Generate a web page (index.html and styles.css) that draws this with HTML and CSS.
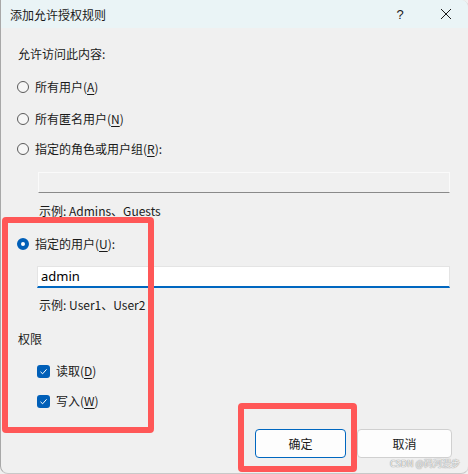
FILE: index.html
```html
<!DOCTYPE html>
<html lang="zh">
<head>
<meta charset="utf-8">
<link rel="stylesheet" href="styles.css">
</head>
<body>
<div class="window">
  <div class="titlebar">
    <span class="title">添加允许授权规则</span>
    <span class="help">?</span>
    <span class="close">
      <svg width="12" height="12" viewBox="0 0 12 12"><path d="M1 1L11 11M11 1L1 11" stroke="#1a1a1a" stroke-width="1"/></svg>
    </span>
  </div>
  <div class="content">
    <div class="row heading">允许访问此内容:</div>
    <div class="row radio-row r1"><span class="radio"></span><span>所有用户(<u>A</u>)</span></div>
    <div class="row radio-row r2"><span class="radio"></span><span>所有匿名用户(<u>N</u>)</span></div>
    <div class="row radio-row r3"><span class="radio"></span><span>指定的角色或用户组(<u>R</u>):</span></div>
    <div class="textbox disabled"></div>
    <div class="row example e1">示例: Admins、Guests</div>
    <div class="row radio-row r4"><span class="radio checked"></span><span>指定的用户(<u>U</u>):</span></div>
    <div class="textbox active">admin</div>
    <div class="row example e2">示例: User1、User2</div>
    <div class="row heading perm">权限</div>
    <div class="row check-row c1"><span class="check"><svg width="13" height="13" viewBox="0 0 13 13"><path d="M3.5 6.8L5.6 8.8L9.6 4.3" fill="none" stroke="#fff" stroke-width="1"/></svg></span><span>读取(<u>D</u>)</span></div>
    <div class="row check-row c2"><span class="check"><svg width="13" height="13" viewBox="0 0 13 13"><path d="M3.5 6.8L5.6 8.8L9.6 4.3" fill="none" stroke="#fff" stroke-width="1"/></svg></span><span>写入(<u>W</u>)</span></div>
    <div class="buttons">
      <button class="btn primary">确定</button>
      <button class="btn">取消</button>
    </div>
  </div>
  <div class="mark mark1"></div>
  <div class="mark mark2"></div>
</div>
<div class="watermark">CSDN @码河漫步</div>
</body>
</html>
```
FILE: styles.css
```css
html, body {
  margin: 0;
  padding: 0;
  background: #f0f0f0;
}
body {
  position: relative;
  width: 468px;
  height: 474px;
  font-family: "Noto Sans CJK SC", "Noto Sans", sans-serif;
  font-size: 12px;
  color: #1a1a1a;
  overflow: hidden;
}
.window {
  position: relative;
  width: 467px;
  height: 473px;
  background: #f0f0f0;
  border-left: 1px solid #a8a8a8;
  border-right: 1px solid #d8d8d8;
  border-bottom: 1px solid #c8c8c8;
  border-radius: 0 8px 8px 8px;
  overflow: hidden;
}
.titlebar {
  height: 28px;
  background: #eaf4f6;
  display: flex;
  align-items: center;
  padding-left: 9px;
}
.title {
  flex: 1;
  font-size: 12px;
}
.help {
  width: 12px;
  margin-right: 34px;
  font-family: "Liberation Sans", sans-serif;
  font-size: 13px;
  text-align: center;
}
.close {
  display: flex;
  margin-right: 16px;
}
.content {
  padding-left: 17px;
  display: flex;
  flex-direction: column;
}
.row {
  height: 20px;
  display: flex;
  align-items: center;
  line-height: 20px;
}
.heading { margin-top: 16px; }
.radio-row { gap: 6px; }
.r1 { margin-top: 13px; }
.r2 { margin-top: 12px; }
.r3 { margin-top: 10px; }
.radio {
  box-sizing: border-box;
  width: 12px;
  height: 12px;
  border-radius: 50%;
  border: 1px solid #5a5a5a;
  background: #f6f6f6;
  margin-left: -1px;
}
.radio.checked {
  border: 4px solid #005fb8;
  background: #fff;
}
u {
  text-decoration: underline;
  text-underline-offset: 2px;
}
.textbox {
  box-sizing: border-box;
  margin-left: 20px;
  width: 412px;
  font-size: 13px;
}
.textbox.disabled {
  margin-top: 13px;
  height: 21px;
  background: #f0f0f0;
  border: 1px solid #fafafa;
  border-bottom: 1px solid #8a8a8a;
}
.textbox.active {
  margin-top: 12px;
  margin-left: 19px;
  width: 413px;
  height: 22px;
  background: #fff;
  border: 1px solid #e4e4e4;
  border-bottom: 2px solid #0067c0;
  padding-left: 3px;
  line-height: 19px;
  color: #000;
  font-family: "Noto Sans", sans-serif;
}
.example {
  margin-left: 21px;
  color: #1a1a1a;
}
.e1 { margin-top: 8px; }
.r4 { margin-top: 13px; }
.e2 { margin-top: 7px; }
.perm { margin-top: 14px; }
.check-row {
  margin-left: 19px;
  gap: 6px;
}
.c1 { margin-top: 12px; }
.c2 { margin-top: 10px; }
.check {
  width: 13px;
  height: 13px;
  border-radius: 3px;
  background: #005fb8;
  display: flex;
}
.buttons {
  margin-top: 18px;
  display: flex;
  gap: 11px;
  margin-left: 237px;
}
.btn {
  box-sizing: border-box;
  height: 29px;
  width: 92px;
  background: #fdfdfd;
  border: 1px solid #d0d0d0;
  border-radius: 4px;
  font-family: inherit;
  font-size: 12px;
  color: #1a1a1a;
  padding: 0;
}
.btn.primary {
  width: 91px;
  border-color: #0067c0;
}
.btn + .btn { width: 95px; }
.mark {
  position: absolute;
  border: 6px solid #ff5757;
  border-radius: 4px;
  box-sizing: border-box;
}
.mark1 {
  left: 1px;
  top: 217px;
  width: 152px;
  height: 216px;
}
.mark2 {
  left: 237px;
  top: 403px;
  width: 119px;
  height: 69px;
}
.watermark {
  position: absolute;
  right: 8px;
  top: 457px;
  line-height: 13px;
  font-family: "Noto Sans CJK SC", sans-serif;
  font-size: 9px;
  color: #f2f2f2;
  text-shadow: 0 0 1px #909090, 0 0 1px #909090;
  white-space: nowrap;
}
```
